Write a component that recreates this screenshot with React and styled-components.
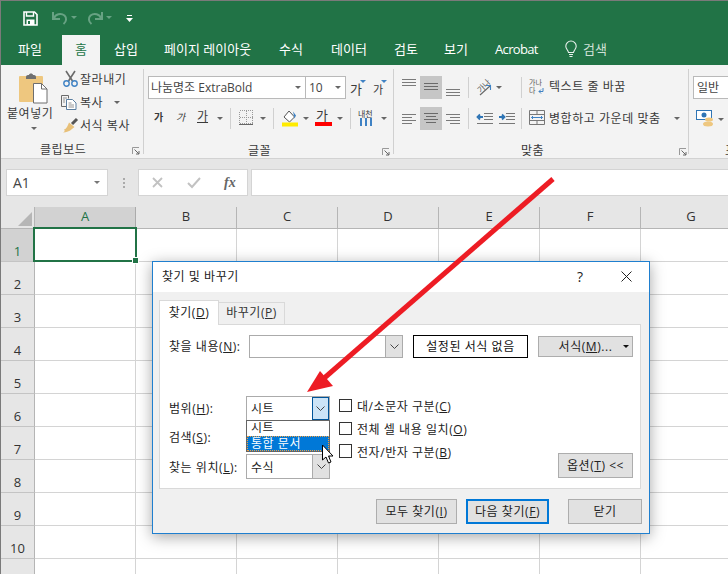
import React from "react";
import styled, { createGlobalStyle, css } from "styled-components";

const Global = createGlobalStyle`
  html, body { margin: 0; padding: 0; background: #fff; }
  body { font-family: "Open Sans", "Noto Sans CJK KR", sans-serif; }
`;

const at = css`
  position: absolute;
  left: ${(p) => p.$x}px;
  top: ${(p) => p.$y}px;
`;
const box = css`
  ${at}
  width: ${(p) => p.$w}px;
  height: ${(p) => p.$h}px;
  box-sizing: border-box;
`;
const KR = `"Open Sans", "Noto Sans CJK KR", sans-serif`;
const TRACK = "0.55px";

const Page = styled.div`
  position: relative; width: 728px; height: 574px; overflow: hidden;
  background: #fff; font-family: ${KR}; color: #222;
  border-left: 1px solid #7a7a7a; box-sizing: border-box;
`;
const TopLine = styled.div`position:absolute;left:-1px;top:0;width:728px;height:1px;background:#7a7a7a;z-index:5;`;
const TitleBand = styled.div`position:absolute;left:0;top:1px;width:728px;height:64px;background:#217346;`;
const TabText = styled.span`
  ${at}
  font-size: 13px; line-height: 18px; height: 18px; color: ${(p) => p.$c || "#fff"};
  white-space: nowrap; letter-spacing: ${(p) => p.$ls || 0}px;
`;
const HomeTab = styled.div`position:absolute;left:61px;top:35px;width:38px;height:30px;background:#f3f3f3;`;
const Ribbon = styled.div`position:absolute;left:0;top:65px;width:728px;height:93px;background:#f3f3f3;border-bottom:1px solid #d2d2d2;box-sizing:content-box;`;
const RibbonText = styled.span`
  ${at}
  font-size: ${(p) => p.$s || 12}px; line-height: 16px; color: #3a3a3a; white-space: nowrap;
  letter-spacing: ${(p) => (p.$s ? "0" : TRACK)};
`;
const TinyStack = styled.span`
  ${at}
  display:flex;flex-direction:column;gap:1px;font-size:7px;line-height:7px;color:#555;white-space:nowrap;
`;
const RotText = styled.span`
  ${at}
  font-size:8px;line-height:9px;color:#555;transform:rotate(-45deg);white-space:nowrap;
`;
const Sep = styled.div`${at} width:1px;height:${(p) => p.$h}px;background:#d0d0d0;`;
const Field = styled.div`
  ${box}
  background:#fff;border:1px solid #b9b9b9;font-size:12px;line-height:21px;padding-left:${(p) => p.$pad || 3}px;color:#444;white-space:nowrap;overflow:hidden;
`;
const Caret = styled.div`
  ${at}
  width:0;height:0;border-left:3px solid transparent;border-right:3px solid transparent;
  border-top:3px solid ${(p) => p.$c || "#666"};
`;
const Pressed = styled.div`${box} background:#c6c6c6;`;
const Launcher = styled.svg`${at} width:8px;height:8px;`;

const FormulaBand = styled.div`position:absolute;left:0;top:159px;width:728px;height:48px;background:#e6e6e6;`;
const NameBox = styled.div`
  ${box}
  background:#fff;border:1px solid #d4d4d4;font-size:14px;line-height:26px;padding-left:6px;color:#444;
`;
const Grip = styled.div`
  ${at} width:2px;height:2px;background:#aaa;box-shadow:0 4px 0 #aaa,0 8px 0 #aaa;
`;
const FormulaBox = styled.div`${box} background:#fff;border:1px solid #d4d4d4;`;
const Fx = styled.i`
  ${at} font-family:"Liberation Serif",serif;font-size:14px;font-weight:bold;line-height:16px;color:#666;
`;

const Sheet = styled.div`
  position:absolute;left:0;top:207px;width:727px;height:367px;overflow:hidden;
  display:grid;grid-template-columns:34px repeat(7,101px);grid-template-rows:22px repeat(11,33px);
`;
const Corner = styled.div`background:#e6e6e6;position:relative;border-right:1px solid #b5b5b5;border-bottom:1px solid #b5b5b5;box-sizing:border-box;`;
const Tri = styled.div`
  position:absolute;right:2px;bottom:2px;width:0;height:0;
  border-left:14px solid transparent;border-bottom:14px solid #b6b6b6;
`;
const ColHead = styled.div`
  background:${(p) => (p.$on ? "#d2d2d2" : "#e6e6e6")};
  color:${(p) => (p.$on ? "#217346" : "#333")};
  border-right:1px solid ${(p) => (p.$on ? "#ababab" : "#b5b5b5")};
  border-bottom:1px solid #b5b5b5;box-sizing:border-box;
  font-size:13px;line-height:19px;text-align:center;
`;
const RowHead = styled.div`
  background:${(p) => (p.$on ? "#d2d2d2" : "#e6e6e6")};
  color:${(p) => (p.$on ? "#217346" : "#333")};
  border-right:1px solid #b5b5b5;border-bottom:1px solid #c4c4c4;box-sizing:border-box;
  font-size:13px;text-align:center;line-height:14px;padding-top:15px;
`;
const Cell = styled.div`border-right:1px solid #d4d4d4;border-bottom:1px solid #d4d4d4;box-sizing:border-box;`;
const Selection = styled.div`
  position:absolute;left:32px;top:227px;width:104px;height:35px;border:2px solid #217346;box-sizing:border-box;
`;
const Handle = styled.div`
  position:absolute;left:132px;top:258px;width:5px;height:5px;background:#217346;border:1px solid #fff;box-sizing:content-box;
  margin:-1px 0 0 -1px;
`;

const Dialog = styled.div`
  position:absolute;left:151px;top:261px;width:498px;height:273px;background:#f0f0f0;
  border:1px solid #1f7fcf;box-sizing:border-box;box-shadow:0 3px 14px rgba(0,0,0,.35);
  letter-spacing:${TRACK};
`;
const DialogTitle = styled.div`
  position:absolute;left:0;top:0;width:100%;height:30px;background:#fff;
  font-size:12px;line-height:30px;padding-left:9px;color:#222;box-sizing:border-box;
`;
const Help = styled.span`position:absolute;left:424px;top:5px;font-size:14px;line-height:20px;color:#222;`;
const TabActive = styled.div`
  ${box} background:#fff;border:1px solid #d9d9d9;border-bottom:none;z-index:2;
  font-size:12px;line-height:23px;text-align:center;color:#222;
`;
const TabIdle = styled.div`
  ${box} background:#f0f0f0;border:1px solid #d9d9d9;border-bottom:none;
  font-size:12px;line-height:20px;text-align:center;color:#333;
`;
const Panel = styled.div`${box} background:#fff;border:1px solid #d9d9d9;`;
const U = styled.span`text-decoration:underline;`;
const Label = styled.span`${at} font-size:12px;line-height:16px;color:#222;white-space:nowrap;`;
const Combo = styled.div`
  ${box} background:#fff;border:1px solid #ababab;font-size:12px;line-height:${(p) => p.$lh || 24}px;padding-left:4px;color:#222;
`;
const ComboBtn = styled.div`
  position:absolute;right:0;top:0;bottom:0;width:17px;
  background:${(p) => (p.$hot ? "#cce4f7" : "#e1e1e1")};
  ${(p) => (p.$hot ? "outline:1px solid #005499;outline-offset:-1px;" : "border-left:1px solid #ababab;")}
  display:flex;align-items:center;justify-content:center;box-sizing:border-box;
`;
const DropList = styled.div`
  ${box} background:#fff;border:1px solid #646464;font-size:12px;color:#222;z-index:3;
`;
const DropItem = styled.div`
  height:15px;line-height:${(p) => (p.$on ? 15 : 13)}px;padding-left:4px;box-sizing:border-box;
  ${(p) => p.$on && "background:#0078d7;color:#fff;outline:1px dotted #f2a040;outline-offset:-1px;"}
`;
const Btn = styled.div`
  ${box} background:#e1e1e1;border:1px solid #adadad;font-size:12px;text-align:center;color:#222;
  line-height:${(p) => p.$h - 2}px;white-space:nowrap;
`;
const DefaultBtn = styled(Btn)`border:2px solid #0078d7;line-height:21px;`;
const NoFormat = styled.div`
  ${box} background:#fff;border:1px solid #000;font-size:12px;text-align:center;line-height:21px;color:#111;
`;
const Check = styled.div`${box} background:#fff;border:1px solid #333;`;
const Overlay = styled.svg`position:absolute;left:-1px;top:0;width:728px;height:574px;z-index:10;pointer-events:none;`;
const Icon = styled.svg`${at} display:block;overflow:visible;`;
const ChevronSvg = styled.svg`display:block;width:9px;height:5px;`;

const Lines = ({ x, y, w = 14, gap = 3, n = 3, widths, c = "#7a7a7a" }) => (
  <Icon $x={x} $y={y} width={w} height={gap * n} viewBox={`0 0 ${w} ${gap * n}`}>
    {Array.from({ length: n }).map((_, i) => {
      const lw = widths ? widths[i] : w;
      return <rect key={i} x={widths && widths.align === "c" ? (w - lw) / 2 : widths && widths.align === "r" ? w - lw : 0} y={i * gap} width={lw} height="1" fill={c} />;
    })}
  </Icon>
);
const wid = (arr, align) => { const a = [...arr]; a.align = align; return a; };

const cols = ["A", "B", "C", "D", "E", "F", "G"];
const rows = [1, 2, 3, 4, 5, 6, 7, 8, 9, 10, 11];
const LaunchMark = ({ x, y }) => (
  <Launcher $x={x} $y={y} viewBox="0 0 8 8">
    <path d="M.5 7V.5H7" fill="none" stroke="#999" />
    <path d="M2.500 2.500L7 7M7 4v3H4" fill="none" stroke="#666" />
  </Launcher>
);
const Chevron = () => (
  <ChevronSvg viewBox="0 0 9 5">
    <path d="M.5.500l4 4 4-4" fill="none" stroke="#444" strokeWidth="1" />
  </ChevronSvg>
);

export default function App() {
  return (
    <Page>
      <Global />
      <TopLine />
      <TitleBand />
      {/* quick access */}
      <Icon $x={22} $y={11} width="15" height="15" viewBox="0 0 15 15">
        <path d="M1 1h10.500L14 3.500V14H1z" fill="none" stroke="#fff" strokeWidth="1.600" />
        <path d="M3.500 1v4h7V1" fill="none" stroke="#fff" strokeWidth="1.400" />
        <rect x="3.500" y="8.500" width="8" height="5.500" fill="#fff" />
        <rect x="5" y="10" width="2" height="3" fill="#217346" />
      </Icon>
      <Icon $x={51} $y={11} width="16" height="14" viewBox="0 0 16 14">
        <path d="M2 7.500C3 3 9 1.500 12.500 4.500C15 7 14.500 10.500 11.500 13" fill="none" stroke="#67a283" strokeWidth="2" />
        <path d="M1 1v7h7" fill="none" stroke="#67a283" strokeWidth="2" />
      </Icon>
      <Caret $x={70} $y={16} $c="#67a283" />
      <Icon $x={86} $y={11} width="16" height="14" viewBox="0 0 16 14">
        <path d="M14 7.500C13 3 7 1.500 3.500 4.500C1 7 1.500 10.500 4.500 13" fill="none" stroke="#67a283" strokeWidth="2" />
        <path d="M15 1v7H8" fill="none" stroke="#67a283" strokeWidth="2" />
      </Icon>
      <Caret $x={105} $y={16} $c="#67a283" />
      <Icon $x={125} $y={15} width="7" height="7" viewBox="0 0 7 7">
        <rect x="1" y="0" width="5" height="1" fill="#fff" />
        <path d="M0 3h7L3.500 7z" fill="#fff" />
      </Icon>

      {/* tabs */}
      <HomeTab />
      <TabText $x={17} $y={40}>파일</TabText>
      <TabText $x={74} $y={40} $c="#217346">홈</TabText>
      <TabText $x={113} $y={40}>삽입</TabText>
      <TabText $x={163} $y={40}>페이지 레이아웃</TabText>
      <TabText $x={278} $y={40}>수식</TabText>
      <TabText $x={330} $y={40}>데이터</TabText>
      <TabText $x={393} $y={40}>검토</TabText>
      <TabText $x={443} $y={40}>보기</TabText>
      <TabText $x={494} $y={40} $ls={-0.65}>Acrobat</TabText>
      <Icon $x={564} $y={41} width="12" height="17" viewBox="0 0 12 17">
        <path d="M3.500 11.500C3 9 .8 8 .8 5.200A5.200 5.200 0 0 1 11.200 5.200C11.200 8 9 9 8.500 11.500z" fill="none" stroke="#e8f0ec" strokeWidth="1.100" />
        <path d="M4 13.500h4M4.500 15.500h3" stroke="#e8f0ec" strokeWidth="1.100" />
      </Icon>
      <TabText $x={582} $y={40} $c="#cfe0d6">검색</TabText>

      <Ribbon />
      {/* clipboard */}
      <Icon $x={18} $y={73} width="29" height="31" viewBox="0 0 29 31">
        <rect x="0" y="3" width="24" height="26" rx="1" fill="#eec77f" />
        <path d="M7 4c0-2 2-2 3-2 0-2 4-2 4 0 1 0 3 0 3 2v2H7z" fill="#6f6f6f" />
        <path d="M14.500 10.500h8l5.500 5.500v14h-13.500z" fill="#fff" stroke="#6e6e6e" />
        <path d="M22.500 10.500v5.500h5.500" fill="none" stroke="#6e6e6e" />
      </Icon>
      <RibbonText $x={6} $y={106}>붙여넣기</RibbonText>
      <Caret $x={30} $y={127} />
      <Icon $x={61} $y={71} width="17" height="16" viewBox="0 0 17 16">
        <path d="M4 0l6.500 10M13 0L6.500 10" stroke="#6a6a6a" strokeWidth="1.600" fill="none" />
        <circle cx="4.500" cy="12.500" r="2.700" fill="none" stroke="#3f82c4" strokeWidth="1.400" />
        <circle cx="12.500" cy="12.500" r="2.700" fill="none" stroke="#3f82c4" strokeWidth="1.400" />
      </Icon>
      <RibbonText $x={79} $y={72}>잘라내기</RibbonText>
      <Icon $x={60} $y={95} width="16" height="15" viewBox="0 0 16 15">
        <path d="M.5.500h7v3M.5.500v11H5" fill="none" stroke="#6a6a6a" />
        <path d="M5.500 4.500h6l3.500 3.500v6.500H5.500z" fill="#fff" stroke="#5a7ea0" />
        <path d="M7.500 8h3M7.500 10h5.500M7.500 12h5.500M2 3h4M2 5h2M2 7h2" stroke="#7a7a7a" strokeWidth=".8" />
      </Icon>
      <RibbonText $x={79} $y={95}>복사</RibbonText>
      <Caret $x={113} $y={101} />
      <Icon $x={61} $y={118} width="17" height="15" viewBox="0 0 17 15">
        <path d="M15 1L10 6" stroke="#555" strokeWidth="3" />
        <path d="M7 4.500l5.500 4.500-2.500 2C8 13 4 14.500 1 14.500c2-1 2-2 1-3 2 0 3.500-3 5-7z" fill="#e8c078" />
      </Icon>
      <RibbonText $x={79} $y={118}>서식 복사</RibbonText>
      <RibbonText $x={39} $y={142}>클립보드</RibbonText>
      <LaunchMark x={131} y={147} />
      <Sep $x={142} $y={69} $h={85} />

      {/* font */}
      <Field $x={147} $y={76} $w={158} $h={23} $pad={2}>나눔명조 ExtraBold</Field>
      <Caret $x={294} $y={86} />
      <Field $x={304} $y={76} $w={41} $h={23} $pad={3}>10</Field>
      <Caret $x={334} $y={86} />
      <RibbonText $x={349} $y={81} $s={13}>가</RibbonText>
      <Caret $x={359} $y={80} $c="#3f82c4" />
      <RibbonText $x={372} $y={82} $s={11}>가</RibbonText>
      <Caret $x={380} $y={80} $c="#3f82c4" />
      <RibbonText $x={153} $y={109} $s={10}><b>가</b></RibbonText>
      <RibbonText $x={175} $y={109} $s={10}><i>가</i></RibbonText>
      <RibbonText $x={196} $y={109} $s={12}><U>가</U></RibbonText>
      <Caret $x={216} $y={117} />
      <Sep $x={229} $y={108} $h={21} />
      <Icon $x={238} $y={110} width="14" height="15" viewBox="0 0 14 15" shapeRendering="crispEdges">
        <path d="M.5.500h13v13H.5zM7 .500v13M.5 7h13" fill="none" stroke="#9a9a9a" strokeDasharray="1 1" />
        <path d="M0 14.500h14" stroke="#666" />
      </Icon>
      <Caret $x={259} $y={117} />
      <Sep $x={272} $y={108} $h={21} />
      <Icon $x={280} $y={110} width="17" height="17" viewBox="0 0 17 17">
        <path d="M8 1l5.500 6-5 5L3 7z" fill="#fff" stroke="#555" />
        <path d="M12 1.500l3 4-1.500 3z" fill="#3f82c4" />
        <rect x="1" y="12.500" width="16" height="4" fill="#ffeb00" />
      </Icon>
      <Caret $x={302} $y={117} />
      <RibbonText $x={315} $y={107} $s={13}>가</RibbonText>
      <Icon $x={314} $y={122} width="17" height="4" viewBox="0 0 17 4">
        <rect width="17" height="4" fill="#f00" />
      </Icon>
      <Caret $x={336} $y={117} />
      <Sep $x={349} $y={108} $h={21} />
      <RibbonText $x={357} $y={106} $s={8}>내천</RibbonText>
      <Icon $x={358} $y={118} width="15" height="8" viewBox="0 0 15 8">
        <path d="M2 0v8M7 0v8M12 0v8" stroke="#3f82c4" strokeWidth="2" />
      </Icon>
      <Caret $x={380} $y={117} />
      <RibbonText $x={247} $y={143}>글꼴</RibbonText>
      <LaunchMark x={381} y={148} />
      <Sep $x={392} $y={69} $h={85} />

      {/* alignment */}
      <Lines x={401} y={79} />
      <Pressed $x={419} $y={76} $w={22} $h={23} />
      <Lines x={423} y={83} c="#6a6a6a" />
      <Lines x={445} y={89} />
      <Sep $x={467} $y={77} $h={21} />
      <RotText $x={475} $y={81}>가나</RotText>
      <Icon $x={477} $y={84} width="14" height="12" viewBox="0 0 14 12">
        <path d="M2 11L12 2" stroke="#666" strokeWidth="1.100" />
        <path d="M12.500 6V1.500H8" fill="none" stroke="#3f82c4" strokeWidth="1.100" />
      </Icon>
      <Caret $x={495} $y={86} />
      <Sep $x={520} $y={77} $h={21} />
      <TinyStack $x={528} $y={79}><span>가나</span><span>다</span></TinyStack>
      <Icon $x={537} $y={88} width="6" height="6" viewBox="0 0 6 6">
        <path d="M5 0v3.500H1M3 1.500L1 3.500l2 2" fill="none" stroke="#3f82c4" />
      </Icon>
      <RibbonText $x={548} $y={79}>텍스트 줄 바꿈</RibbonText>
      <Lines x={401} y={114} widths={wid([14, 10, 14, 10], "l")} n={4} gap={3} />
      <Pressed $x={419} $y={107} $w={22} $h={23} />
      <Lines x={423} y={113} widths={wid([14, 10, 14, 10], "c")} n={4} c="#6a6a6a" />
      <Lines x={445} y={114} widths={wid([14, 10, 14, 10], "r")} n={4} />
      <Sep $x={467} $y={108} $h={21} />
      <Icon $x={475} $y={113} width="17" height="11" viewBox="0 0 17 11">
        <path d="M8 .500h9M8 3.500h9M8 6.500h9M1 10.500h16" stroke="#777" />
        <path d="M7 4H3M4 1.500L1.500 4 4 6.500" fill="none" stroke="#2f75b5" strokeWidth="1.800" />
      </Icon>
      <Icon $x={497} $y={113} width="17" height="11" viewBox="0 0 17 11">
        <path d="M8 .500h9M8 3.500h9M8 6.500h9M1 10.500h16" stroke="#777" />
        <path d="M1 4h5M4 1.500L6.500 4 4 6.500" fill="none" stroke="#2f75b5" strokeWidth="1.800" />
      </Icon>
      <Sep $x={520} $y={108} $h={21} />
      <Icon $x={528} $y={110} width="16" height="15" viewBox="0 0 16 15">
        <path d="M.5.500h15v14H.5zM.5 4.500h15M.5 10.500h15M8 .500v4M8 10.500v4" fill="none" stroke="#777" />
        <path d="M2.500 7.500h11" stroke="#3f82c4" />
        <path d="M4 6L2.500 7.500 4 9M12 6l1.500 1.500L12 9" fill="none" stroke="#3f82c4" />
      </Icon>
      <RibbonText $x={548} $y={111}>병합하고 가운데 맞춤</RibbonText>
      <Caret $x={673} $y={117} />
      <RibbonText $x={520} $y={143}>맞춤</RibbonText>
      <LaunchMark x={678} y={148} />
      <Sep $x={687} $y={69} $h={85} />

      {/* number */}
      <Field $x={692} $y={76} $w={40} $h={23} $pad={3}>일반</Field>
      <Icon $x={695} $y={110} width="18" height="17" viewBox="0 0 18 17">
        <rect x=".5" y=".5" width="15" height="9" fill="#fff" stroke="#2f75b5" />
        <circle cx="8" cy="5" r="2.500" fill="#2f75b5" />
        <ellipse cx="12" cy="14" rx="5" ry="2.500" fill="#eec77f" />
        <ellipse cx="13" cy="9.500" rx="4" ry="2" fill="#eec77f" />
      </Icon>
      <Caret $x={717} $y={118} />
      <RibbonText $x={724} $y={143}>표</RibbonText>

      {/* formula bar */}
      <FormulaBand />
      <NameBox $x={5} $y={169} $w={102} $h={27}>A1</NameBox>
      <Caret $x={93} $y={181} $c="#777" />
      <Grip $x={122} $y={178} />
      <FormulaBox $x={137} $y={169} $w={110} $h={27} />
      <Icon $x={151} $y={177} width="11" height="11" viewBox="0 0 11 11">
        <path d="M1 1l9 9M10 1l-9 9" stroke="#c2c2c2" strokeWidth="1.800" />
      </Icon>
      <Icon $x={186} $y={177} width="14" height="11" viewBox="0 0 14 11">
        <path d="M1 6l4 4 8-9" fill="none" stroke="#c2c2c2" strokeWidth="2" />
      </Icon>
      <Fx $x={223} $y={175}>fx</Fx>
      <FormulaBox $x={250} $y={169} $w={480} $h={27} />

      {/* sheet */}
      <Sheet>
        <Corner><Tri /></Corner>
        {cols.map((c, i) => <ColHead key={c} $on={i === 0}>{c}</ColHead>)}
        {rows.map((r) => (
          <React.Fragment key={r}>
            <RowHead $on={r === 1}>{r < 11 ? r : null}</RowHead>
            {cols.map((c) => <Cell key={c} />)}
          </React.Fragment>
        ))}
      </Sheet>
      <Selection />
      <Handle />

      {/* dialog */}
      <Dialog>
        <DialogTitle>찾기 및 바꾸기</DialogTitle>
        <Help>?</Help>
        <Icon $x={468} $y={9} width="11" height="11" viewBox="0 0 11 11">
          <path d="M.5.500l10 10M10.500.500l-10 10" stroke="#222" strokeWidth="1" />
        </Icon>
        <TabActive $x={6} $y={38} $w={60} $h={25}>찾기(<U>D</U>)</TabActive>
        <TabIdle $x={65} $y={40} $w={67} $h={22}>바꾸기(<U>P</U>)</TabIdle>
        <Panel $x={6} $y={62} $w={482} $h={165} />
        <Label $x={16} $y={77}>찾을 내용(<U>N</U>):</Label>
        <Combo $x={96} $y={73} $w={154} $h={23}><ComboBtn><Chevron /></ComboBtn></Combo>
        <NoFormat $x={260} $y={73} $w={115} $h={23}>설정된 서식 없음</NoFormat>
        <Btn $x={385} $y={74} $w={95} $h={21}>서식(<U>M</U>)...</Btn>
        <Caret $x={470} $y={83} $c="#111" />
        <Label $x={16} $y={139}>범위(<U>H</U>):</Label>
        <Combo $x={93} $y={134} $w={84} $h={25}>시트<ComboBtn $hot><Chevron /></ComboBtn></Combo>
        <DropList $x={93} $y={158} $w={84} $h={32}>
          <DropItem>시트</DropItem>
          <DropItem $on>통합 문서</DropItem>
        </DropList>
        <Label $x={16} $y={168}>검색(<U>S</U>):</Label>
        <Label $x={16} $y={198}>찾는 위치(<U>L</U>):</Label>
        <Combo $x={93} $y={192} $w={84} $h={25} $lh={26}>수식<ComboBtn><Chevron /></ComboBtn></Combo>
        <Check $x={186} $y={137} $w={13} $h={13} />
        <Label $x={204} $y={137}>대/소문자 구분(<U>C</U>)</Label>
        <Check $x={186} $y={160} $w={13} $h={13} />
        <Label $x={204} $y={160}>전체 셀 내용 일치(<U>O</U>)</Label>
        <Check $x={186} $y={182} $w={13} $h={14} />
        <Label $x={204} $y={183}>전자/반자 구분(<U>B</U>)</Label>
        <Btn $x={405} $y={191} $w={75} $h={25}>옵션(<U>T</U>) &lt;&lt;</Btn>
        <Btn $x={223} $y={237} $w={81} $h={25}>모두 찾기(<U>I</U>)</Btn>
        <DefaultBtn $x={313} $y={237} $w={83} $h={25}>다음 찾기(<U>F</U>)</DefaultBtn>
        <Btn $x={415} $y={237} $w={74} $h={25}>닫기</Btn>
      </Dialog>

      {/* annotation + cursor */}
      <Overlay viewBox="0 0 728 574">
        <path d="M553 179L322 380" stroke="#ed1c24" strokeWidth="5" fill="none" />
        <path d="M307 392L320 371L333 386z" fill="#ed1c24" />
        <path d="M322.500 445v15l3.500-3 2.500 6 2.500-1-2.500-6h4.500z" fill="#fff" stroke="#000" strokeWidth="1" />
      </Overlay>
    </Page>
  );
}
